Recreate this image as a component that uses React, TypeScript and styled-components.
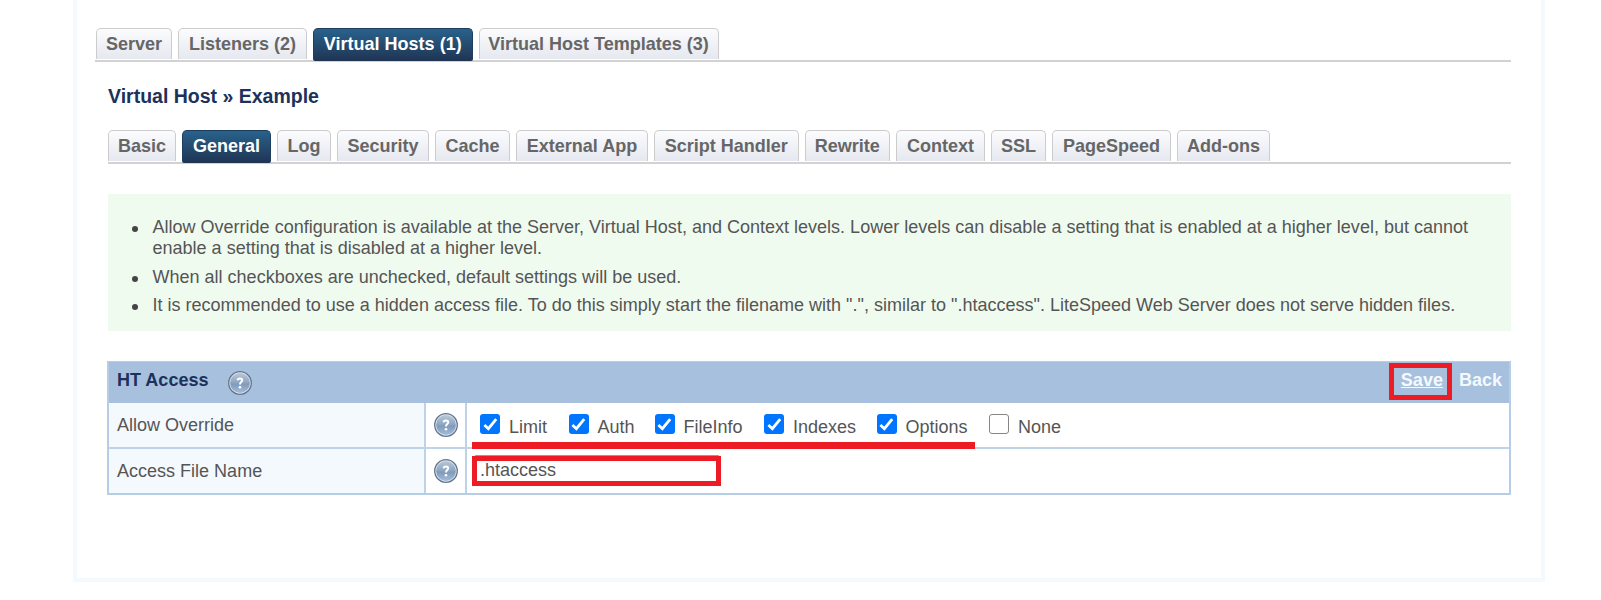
import React from "react";
import styled, { createGlobalStyle, css } from "styled-components";

const GlobalStyle = createGlobalStyle`
  * { box-sizing: border-box; }
  body {
    margin: 0;
    background: #fff;
    color: #555;
    font: 18.02px/22px "Liberation Sans", Arial, sans-serif;
  }
`;

const Frame = styled.main`
  width: 1472px;
  height: 582px;
  margin-left: 73px;
  padding: 28px 30px 0 18px;
  border: 4px solid #f4f9fd;
  border-top: 0;
`;

const TabBar = styled.nav<{ $indent?: number }>`
  display: flex;
  gap: 6px;
  height: 34px;
  padding-left: ${(p) => p.$indent ?? 0}px;
  border-bottom: 2px solid #d2d2d2;
`;

const Tab = styled.a<{ $active?: boolean; $w: number }>`
  width: ${(p) => p.$w}px;
  height: 31px;
  padding-top: 4px;
  border: 1px solid #ccc;
  border-bottom: 0;
  border-radius: 5px 5px 0 0;
  background: linear-gradient(#fcfcfe, #e5e8ef);
  color: #666;
  font-weight: bold;
  text-align: center;
  white-space: nowrap;
  ${(p) =>
    p.$active &&
    css`
      height: 33px;
      border-color: #1d3e5f;
      border-radius: 5px 5px 2px 2px;
      background: linear-gradient(#29628c, #203453);
      color: #fff;
    `}
`;

const Content = styled.section`
  margin-left: 13px;
`;

const Title = styled.h1`
  margin: 23px 0;
  color: #1c315b;
  font-size: 19.5px;
  line-height: 22px;
`;

const Notes = styled.ul`
  height: 137px;
  margin: 30px 0;
  padding: 22.5px 36px 0 44.5px;
  background: #f0fbf0;
  line-height: 21.5px;
  list-style: none;
`;

const Note = styled.li`
  position: relative;
  margin-bottom: 7px;
  &::before {
    content: "";
    position: absolute;
    left: -21px;
    top: 9px;
    width: 6px;
    height: 6px;
    border-radius: 50%;
    background: #444;
  }
`;

const Panel = styled.div`
  height: 134px;
  margin-left: -1px;
  border: 2px solid #b5cde5;
  border-top-width: 1px;
`;

const PanelHeader = styled.header`
  display: flex;
  height: 41px;
  padding: 7px 7px 0 8px;
  background: #a6c0de;
  color: #1c315b;
  font-weight: bold;
`;

const HeaderHelp = styled.span`
  display: flex;
  margin: 2px 0 0 20px;
`;

const Actions = styled.span`
  display: flex;
  gap: 16px;
  margin-left: auto;
  color: #f4f9fd;
`;

const Marked = styled.span`
  position: relative;
`;

const SaveLink = styled.a`
  text-decoration: underline;
`;

const SaveMark = styled.span`
  position: absolute;
  left: -12px;
  top: -6px;
  width: 63px;
  height: 37px;
  border: 5px solid #ed1c24;
`;

const Row = styled.div<{ $h: number }>`
  display: grid;
  grid-template-columns: 317px 41px 1fr;
  height: ${(p) => p.$h}px;
  & + & {
    border-top: 2px solid #bfd3e8;
  }
`;

const Label = styled.div`
  padding: 11px 8px 0;
  border-right: 2px solid #bfd3e8;
  background: #f4f9fd;
`;

const HelpCell = styled.div`
  display: flex;
  justify-content: center;
  padding-top: 10px;
  border-right: 2px solid #bfd3e8;
`;

const Value = styled.div`
  position: relative;
  display: flex;
  padding: 11px 0 0 13px;
`;

const Option = styled.label<{ $w: number }>`
  display: flex;
  gap: 9px;
  width: ${(p) => p.$w}px;
  line-height: 27px;
`;

const Box = styled.span<{ $on: boolean }>`
  display: flex;
  flex: none;
  align-items: center;
  justify-content: center;
  width: 20px;
  height: 20px;
  border: ${(p) => (p.$on ? "0" : "1.5px solid #868686")};
  border-radius: 3px;
  background: ${(p) => (p.$on ? "#0075ff" : "#fff")};
`;

const UnderlineMark = styled.span`
  position: absolute;
  left: 5px;
  top: 39px;
  z-index: 1;
  width: 503px;
  height: 7px;
  background: #ed1c24;
`;

const Field = styled.input`
  position: absolute;
  left: 7px;
  top: 6px;
  width: 246px;
  height: 31px;
  padding: 0 0 0 5px;
  border: 1px solid #999;
  border-radius: 2px;
  background: #fff;
  color: #555;
  font: inherit;
  outline: 0;
`;

const FieldMark = styled.span`
  position: absolute;
  left: 5px;
  top: 7px;
  width: 249px;
  height: 30px;
  border: 5px solid #ed1c24;
  pointer-events: none;
`;

const Help = () => (
  <svg width="24" height="24" viewBox="0 0 24 24">
    <defs>
      <linearGradient id="ball" x1="0" y1="0" x2="0" y2="1">
        <stop offset="0" stopColor="#b9c8d9" />
        <stop offset=".5" stopColor="#8ba4c0" />
        <stop offset=".55" stopColor="#7f9bba" />
        <stop offset="1" stopColor="#a3bddb" />
      </linearGradient>
    </defs>
    <circle cx="12" cy="12" r="11.3" fill="#dfe7ee" stroke="#64748c" strokeWidth="1.3" />
    <circle cx="12" cy="12" r="9.9" fill="url(#ball)" />
    <path
      d="M9.6 9.3C9.8 6.8 14.2 6.8 14.2 9.3C14.2 11 12 11.2 12 13.4"
      fill="none"
      stroke="#fff"
      strokeWidth="2"
    />
    <circle cx="12" cy="16.3" r="1.3" fill="#fff" />
  </svg>
);

const Check = () => (
  <svg width="17" height="17" viewBox="0 0 17 17">
    <path d="M2.4 8.9L6.4 12.7L14.2 3.2" fill="none" stroke="#fff" strokeWidth="2.8" />
  </svg>
);

type TabItem = [label: string, width: number, active?: boolean];

const mainTabs: TabItem[] = [
  ["Server", 76],
  ["Listeners (2)", 129],
  ["Virtual Hosts (1)", 159.5, true],
  ["Virtual Host Templates (3)", 240],
];

const hostTabs: TabItem[] = [
  ["Basic", 68],
  ["General", 89, true],
  ["Log", 54],
  ["Security", 92],
  ["Cache", 75],
  ["External App", 132],
  ["Script Handler", 144.5],
  ["Rewrite", 85.5],
  ["Context", 89],
  ["SSL", 55],
  ["PageSpeed", 119],
  ["Add-ons", 93],
];

const options: [string, number, boolean][] = [
  ["Limit", 88.5, true],
  ["Auth", 86, true],
  ["FileInfo", 109.5, true],
  ["Indexes", 112.5, true],
  ["Options", 112.5, true],
  ["None", 90, false],
];

const Tabs = ({ items, indent }: { items: TabItem[]; indent?: number }) => (
  <TabBar $indent={indent}>
    {items.map(([label, width, active]) => (
      <Tab key={label} $w={width} $active={active}>
        {label}
      </Tab>
    ))}
  </TabBar>
);

export default function App() {
  return (
    <>
      <GlobalStyle />
      <Frame>
        <Tabs items={mainTabs} indent={1} />
        <Content>
          <Title>Virtual Host » Example</Title>
          <Tabs items={hostTabs} />
          <Notes>
            <Note>
              Allow Override configuration is available at the Server, Virtual Host, and Context
              levels. Lower levels can disable a setting that is enabled at a higher level, but
              cannot enable a setting that is disabled at a higher level.
            </Note>
            <Note>When all checkboxes are unchecked, default settings will be used.</Note>
            <Note>
              It is recommended to use a hidden access file. To do this simply start the filename
              with ".", similar to ".htaccess". LiteSpeed Web Server does not serve hidden files.
            </Note>
          </Notes>
          <Panel>
            <PanelHeader>
              HT Access
              <HeaderHelp>
                <Help />
              </HeaderHelp>
              <Actions>
                <Marked>
                  <SaveLink>Save</SaveLink>
                  <SaveMark />
                </Marked>
                <a>Back</a>
              </Actions>
            </PanelHeader>
            <Row $h={44}>
              <Label>Allow Override</Label>
              <HelpCell>
                <Help />
              </HelpCell>
              <Value>
                {options.map(([label, width, on]) => (
                  <Option key={label} $w={width}>
                    <Box $on={on}>{on && <Check />}</Box>
                    {label}
                  </Option>
                ))}
                <UnderlineMark />
              </Value>
            </Row>
            <Row $h={46}>
              <Label>Access File Name</Label>
              <HelpCell>
                <Help />
              </HelpCell>
              <Value>
                <Field defaultValue=".htaccess" />
                <FieldMark />
              </Value>
            </Row>
          </Panel>
        </Content>
      </Frame>
    </>
  );
}
